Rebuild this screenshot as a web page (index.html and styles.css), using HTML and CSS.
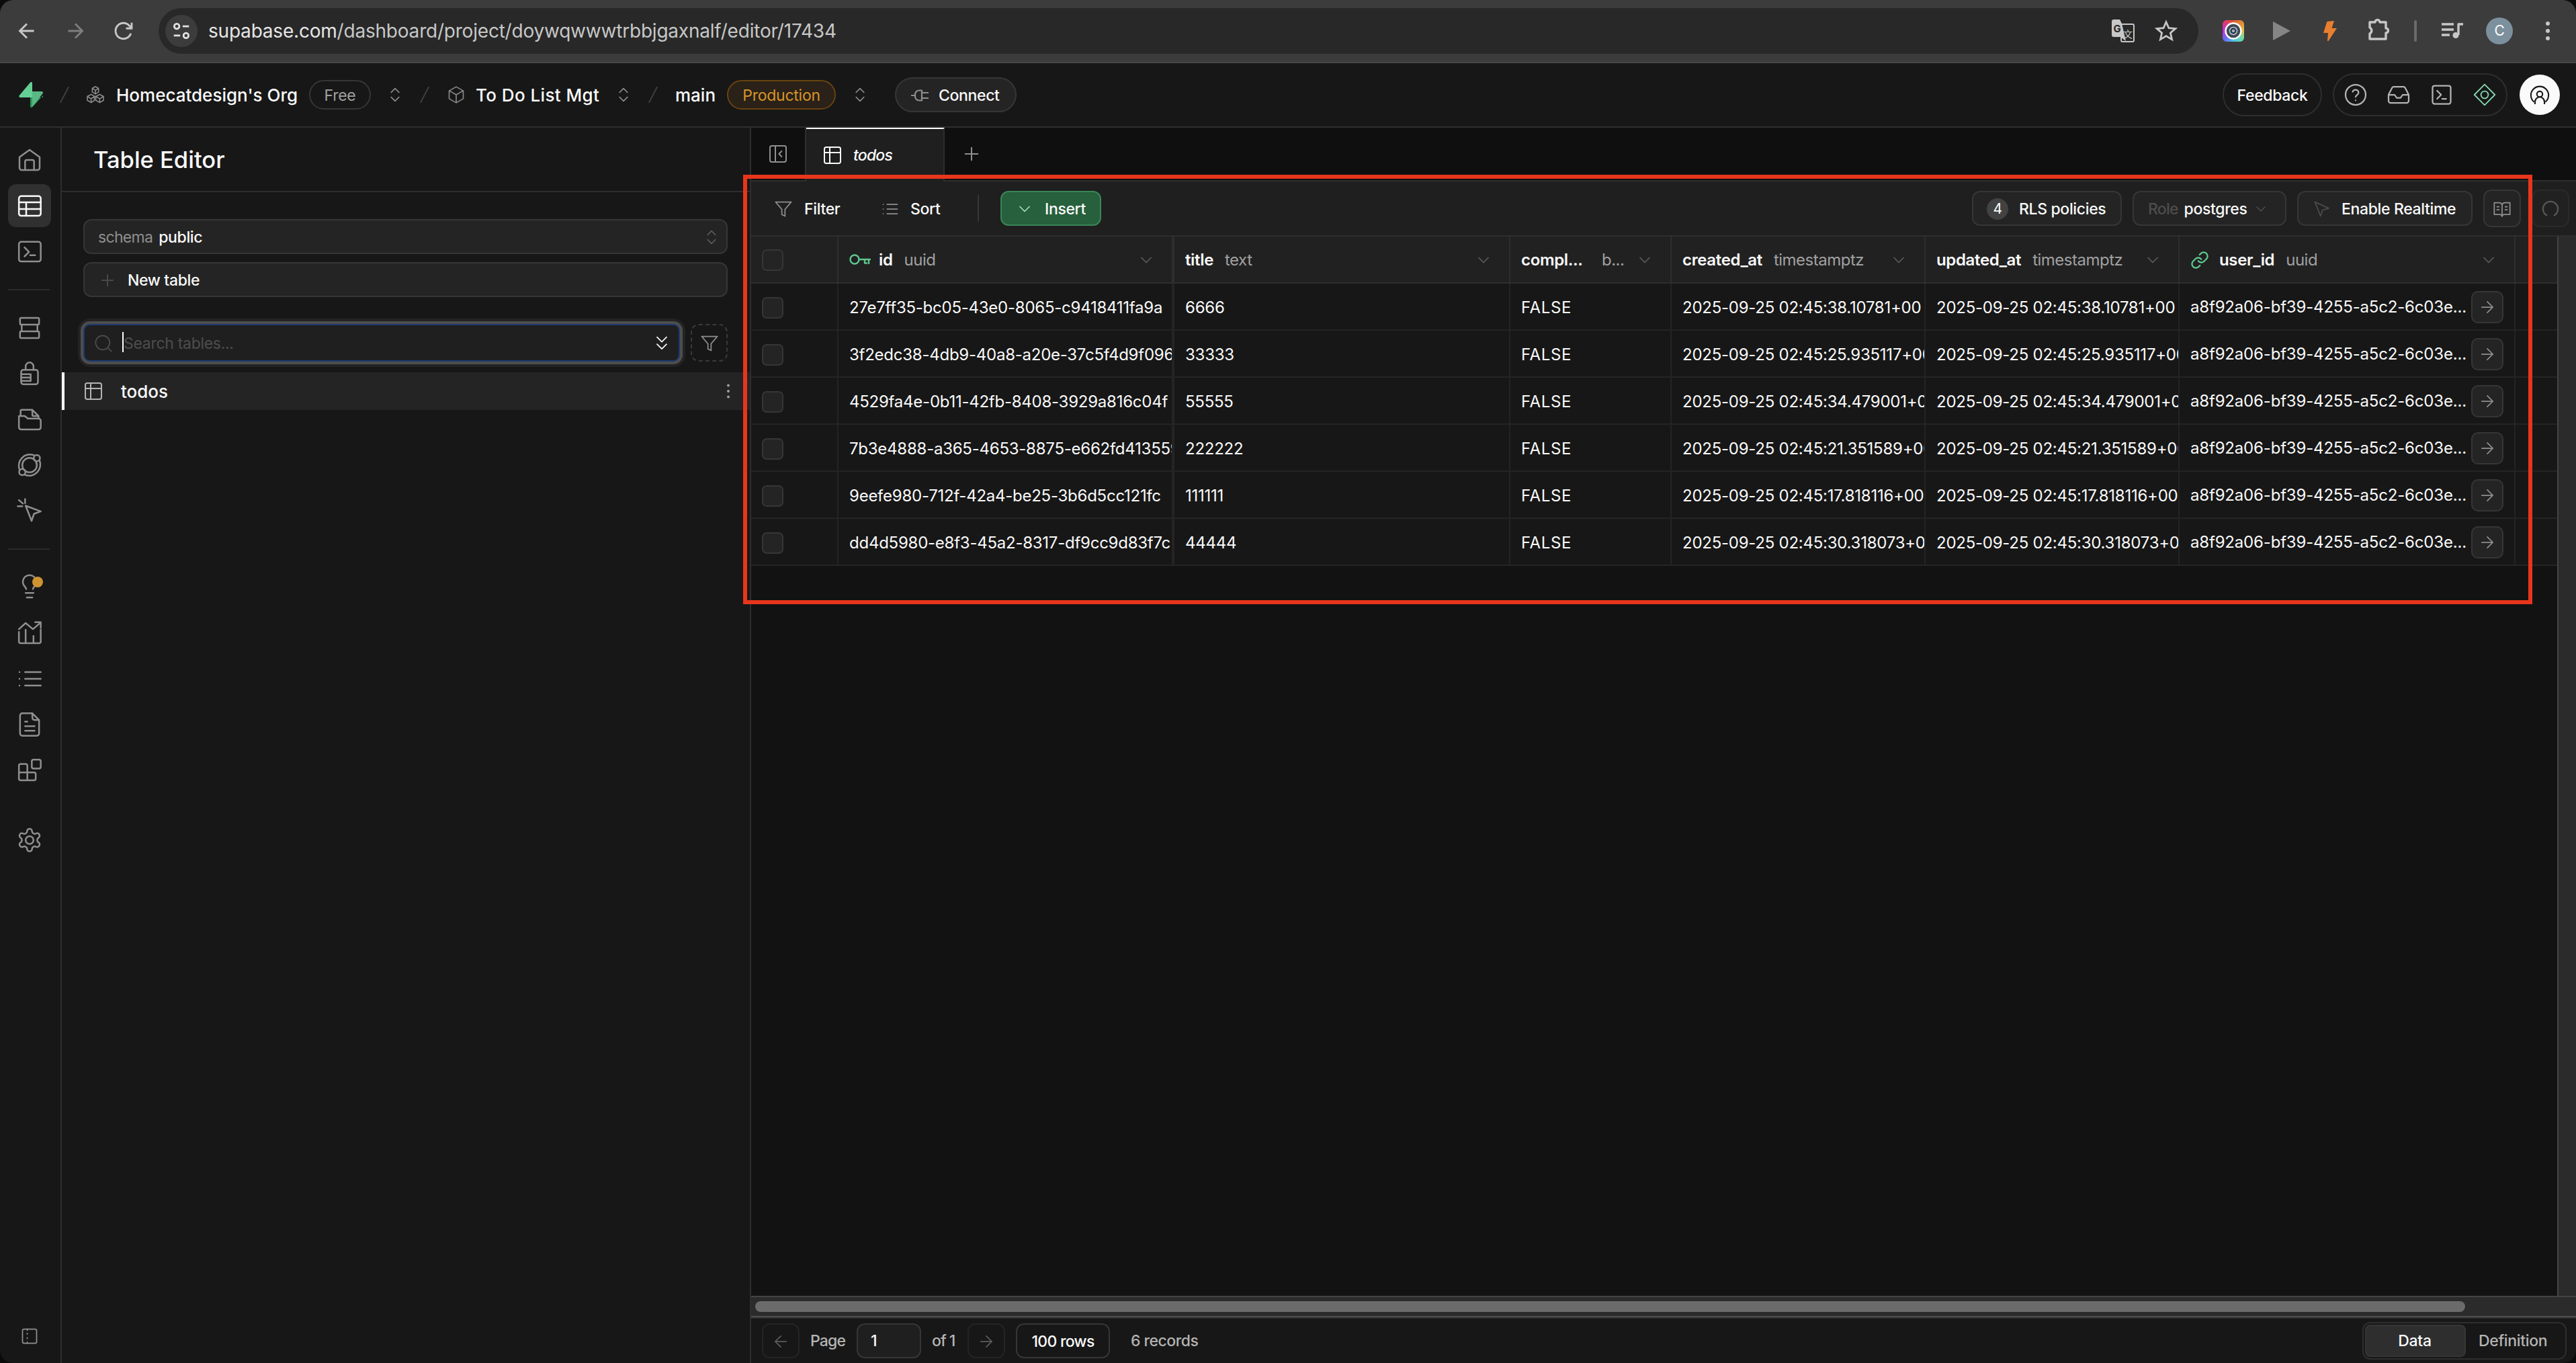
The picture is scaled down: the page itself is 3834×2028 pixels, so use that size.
FILE: index.html
```
<!DOCTYPE html>
<html lang="en">
<head>
    <meta charset="UTF-8">
    <meta name="viewport" content="width=device-width, initial-scale=1.0">
    <title>todos | Table Editor | Supabase</title>
    <link rel="stylesheet" href="styles.css">
</head>
<body>
    <!-- icon set -->
    <svg class="sprite">
        <symbol id="chevrons" viewBox="0 0 24 24"><path d="m7 15 5 5 5-5M7 9l5-5 5 5"/></symbol>
        <symbol id="chevron" viewBox="0 0 24 24"><path d="m6 9 6 6 6-6"/></symbol>
        <symbol id="slash" viewBox="0 0 14 24"><path d="M13 .5 1 23.5"/></symbol>
        <symbol id="arrow" viewBox="0 0 24 24"><path d="M5 12h14M12 5l7 7-7 7"/></symbol>
        <symbol id="arrow-left" viewBox="0 0 24 24"><path d="M19 12H5M12 19l-7-7 7-7"/></symbol>
        <symbol id="plus" viewBox="0 0 24 24"><path d="M5 12h14M12 5v14"/></symbol>
        <symbol id="filter" viewBox="0 0 24 24"><path d="M22 3H2l8 9.46V19l4 2v-8.54z"/></symbol>
        <symbol id="list" viewBox="0 0 24 24"><path d="M8 6h13M8 12h13M8 18h13M3 6h.01M3 12h.01M3 18h.01"/></symbol>
        <symbol id="table" viewBox="0 0 24 24"><rect x="3" y="3" width="18" height="18" rx="2"/><path d="M3 9h18M9 3v18"/></symbol>
        <symbol id="terminal" viewBox="0 0 24 24"><rect x="3" y="3" width="18" height="18" rx="2"/><path d="m7.5 8 4 4-4 4M12.5 16h4"/></symbol>
    </svg>

    <div class="window">
        <div class="browser-bar">
            <svg class="nav-icon"><use href="#arrow-left"/></svg>
            <svg class="nav-icon disabled"><use href="#arrow"/></svg>
            <svg class="nav-icon" viewBox="0 0 24 24"><path d="M19.2 14.5A7.8 7.8 0 1 1 17.8 7l2.2 2.4M20 3.8v5.7h-5.6"/></svg>
            <div class="omnibox">
                <div class="site-info">
                    <svg viewBox="0 0 24 24"><circle cx="6.5" cy="6.5" r="3"/><path d="M13.5 6.5H21M3 17.500h7.500"/><circle cx="17.500" cy="17.500" r="3"/></svg>
                </div>
                <div class="url"><b>supabase.com</b>/dashboard/project/doywqwwwtrbbjgaxnalf/editor/17434</div>
                <svg class="translate" viewBox="0 0 34 34">
                    <rect x="14" y="7" width="19" height="26" rx="2" fill="none" stroke="#c7c7c7" stroke-width="2"/>
                    <text x="17" y="27" class="tr-zh">文</text>
                    <path d="M3 0h9l3 6 6 26-8-6H3q-3 0-3-3V3q0-3 3-3z" fill="#c7c7c7"/>
                    <text x="2.500" y="19" class="tr-g">G</text>
                </svg>
                <svg class="star" viewBox="0 0 32 32"><path d="M16 3.500 19.700 12l9.300.8-7 6.100 2.100 9.100L16 23.200 7.900 28 10 18.900 3 12.800l9.300-.8z"/></svg>
            </div>
            <div class="extensions">
                <svg class="ext-camera" viewBox="0 0 32 32"><circle cx="16" cy="16" r="11.500" fill="#3d4a56" stroke="#fff" stroke-width="2.500"/><circle cx="16" cy="16" r="5.500" fill="#27415a"/><circle cx="16" cy="16" r="1.300" fill="#5d7c93"/></svg>
                <svg class="ext-play" viewBox="0 0 28 28"><path d="M1 0v28l26-14z" fill="#858585"/></svg>
                <svg class="ext-bolt" viewBox="0 0 20 30"><path d="M5.500 1 16 0l-3.500 11H20L7.500 30H6l1-12H0z" fill="#e97f2e"/></svg>
                <svg class="ext-puzzle" viewBox="0 0 34 34"><path d="M3 6h8a3.500 3.500 0 0 1 7 0h9v9a3.500 3.500 0 0 1 0 7v9H3v-8a5 5 0 0 0 0-9z"/></svg>
                <span class="ext-divider"></span>
                <svg class="ext-music" viewBox="0 0 32 24"><path d="M0 2h18M0 10h18M0 18h12M25 18V2h7" /><circle cx="21" cy="18.500" r="4.500"/></svg>
                <span class="chrome-avatar">C</span>
                <svg class="chrome-menu" viewBox="0 0 6 30"><circle cx="3" cy="4" r="3"/><circle cx="3" cy="15" r="3"/><circle cx="3" cy="26" r="3"/></svg>
            </div>
        </div>

        <header class="topbar">
            <svg class="logo" viewBox="0 0 36 38"><path d="M20 37.500c-1 1.200-2.900.5-2.900-1V23h17.400c1.600 0 2.500-1.700 1.500-3z" fill="#2f9a63"/><path d="M17 .7C18-.6 20 .1 20 1.700V23H2.300c-1.600 0-2.500-1.800-1.500-3z" fill="#64cf94"/><path d="M20 14h14c1.700 0 2.600 2 1.500 3.300L20 37z" fill="#58b984"/></svg>
            <svg class="slash first"><use href="#slash"/></svg>
            <svg class="crumb-icon" viewBox="0 0 24 24"><path d="m12 1.500 4 2.300v4.700L12 11 8 8.500V3.800zM12 6.300V11M8 3.800l4 2.500 4-2.500M6.500 11.500l4.300 2.600v5L6.500 22l-4.800-2.900v-5zM6.500 17v5M1.700 14.100l4.800 2.900 5.500-3M17.500 11.500l4.800 2.600v5L17.500 22l-5-2.900v-5zM17.500 17v5M12.500 14.100l5 2.900 4.800-2.900"/></svg>
            <span class="crumb org">Homecatdesign's Org</span>
            <span class="badge">Free</span>
            <svg class="updown"><use href="#chevrons"/></svg>
            <svg class="slash"><use href="#slash"/></svg>
            <svg class="crumb-icon box" viewBox="0 0 24 24"><path d="M12 1.800 21 7v10l-9 5.200L3 17V7zM3.300 7 12 12l8.700-5M12 22V12"/></svg>
            <span class="crumb project">To Do List Mgt</span>
            <svg class="updown"><use href="#chevrons"/></svg>
            <svg class="slash"><use href="#slash"/></svg>
            <span class="crumb branch">main</span>
            <span class="badge production">Production</span>
            <svg class="updown"><use href="#chevrons"/></svg>
            <button class="connect">
                <svg viewBox="0 0 26 18"><path d="M0 9h6M16 1.500v15h-4a6 6 0 0 1-6-6v-3a6 6 0 0 1 6-6zM17 5h9M17 13h9"/></svg>
                Connect
            </button>

            <div class="topbar-right">
                <button class="feedback">Feedback</button>
                <div class="tools">
                    <svg viewBox="0 0 24 24"><circle cx="12" cy="12" r="10"/><path d="M9.100 9a3 3 0 0 1 5.800 1c0 2-2.900 2.500-2.900 4.200M12 17.500h.01"/></svg>
                    <svg viewBox="0 0 24 24"><path d="M22 12h-6l-2 3h-4l-2-3H2M5.500 5.100 2 12v6a2 2 0 0 0 2 2h16a2 2 0 0 0 2-2v-6l-3.500-6.900A2 2 0 0 0 16.800 4H7.200a2 2 0 0 0-1.700 1.100z"/></svg>
                    <svg viewBox="0 0 24 24"><use href="#terminal"/></svg>
                    <svg class="assistant" viewBox="0 0 24 24"><path d="m12 1.800 10.200 10.200L12 22.200 1.800 12z"/><circle cx="12" cy="12" r="3.600"/></svg>
                </div>
                <div class="profile">
                    <svg viewBox="0 0 32 32"><path d="M7 27.500A14 14 0 1 1 25 27.500"/><circle cx="16" cy="15" r="4.500"/><path d="M8.500 31v-3.500a7.500 8 0 0 1 15 0V31"/></svg>
                </div>
            </div>
        </header>

        <div class="layout">
            <nav class="rail">
                <a><svg viewBox="0 0 24 24"><path d="M3 9.500 12 3l9 6.500V19a2 2 0 0 1-2 2H5a2 2 0 0 1-2-2zM8 21v-7.500a1.500 1.500 0 0 1 1.500-1.500h5a1.500 1.500 0 0 1 1.500 1.500V21"/></svg></a>
                <a class="active"><svg viewBox="0 0 24 24"><rect x="2.500" y="3.500" width="19.500" height="17.500" rx="2"/><path d="M2.500 9H22M2.500 15H22M9 9v12"/></svg></a>
                <a><svg viewBox="0 0 24 24"><rect x="2.500" y="3.500" width="19.500" height="17.500" rx="2"/><path d="m7.500 8.500 4 4-4 4M12.500 15.500h4.500"/></svg></a>
                <hr>
                <a><svg viewBox="0 0 24 24"><rect x="3.500" y="3" width="17" height="6" rx="1"/><path d="M5 9v6M19 9v6"/><rect x="3.500" y="15" width="17" height="6" rx="1"/></svg></a>
                <a><svg viewBox="0 0 24 24"><rect x="4.500" y="8.500" width="15" height="13" rx="2"/><path d="M8.500 8.500V5.500a3.500 3.500 0 0 1 7 0v3M4.500 12.500h8.500v6H4.500M4.500 15.500H13"/></svg></a>
                <a><svg viewBox="0 0 24 24"><path d="M4 9V4.500a1 1 0 0 1 1-1h9.500L20 9v2M14.500 3.500V8a1 1 0 0 0 1 1H20M2.500 9h5.200l2.800 2.300H20a2 2 0 0 1 2 2V19a2 2 0 0 1-2 2H4.500a2 2 0 0 1-2-2z"/></svg></a>
                <a><svg viewBox="0 0 24 24"><circle cx="12" cy="12" r="6.500"/><circle cx="18.500" cy="5.800" r="2.800"/><circle cx="5.500" cy="18.200" r="2.800"/><path d="M16 3.200A10 10 0 0 0 3.200 16.500M20.800 7.500A10 10 0 0 1 8 20.800"/></svg></a>
                <a><svg viewBox="0 0 24 24"><path d="m8.500 7.500 13.500 5-6 2.200L13.800 21zM8 1.500v3.700M1.500 8h4M2.500 2.500l3.500 3"/></svg></a>
                <hr>
                <a class="advisor"><svg viewBox="0 0 24 24"><path d="M9 13.500c-.3-1.500-1-2-2-3.200A6 6 0 1 1 17 10.300c-1 1.200-1.700 1.700-2 3.200M8.500 17h7M9.500 21h5"/></svg><i></i></a>
                <a><svg viewBox="0 0 24 24"><path d="M2.500 11v8.500a1.500 1.500 0 0 0 1.500 1.500h16.500a1.500 1.500 0 0 0 1.500-1.500V9M8.500 9v12M15.500 14.500V21M2.500 8.500l6-5.500 6.500 5.500L22 2.500M17 2.300h5v5"/></svg></a>
                <a><svg viewBox="0 0 24 24"><path d="M8 6h14M8 12h14M8 18h14M3 6h.01M3 12h.01M3 18h.01"/></svg></a>
                <a><svg viewBox="0 0 24 24"><path d="M14.500 2H5.500a2 2 0 0 0-2 2v16a2 2 0 0 0 2 2h13a2 2 0 0 0 2-2V8zM14.500 2v4a2 2 0 0 0 2 2h4M8 9.500h2M8 13.500h8.500M8 17.500h8.500"/></svg></a>
                <a><svg viewBox="0 0 24 24"><rect x="14" y="2.500" width="8" height="8" rx="1.500"/><path d="M10 21V8a1.500 1.500 0 0 0-1.500-1.500H4A1.500 1.500 0 0 0 2.500 8v11.500A1.500 1.500 0 0 0 4 21h12a1.500 1.500 0 0 0 1.500-1.500v-4A1.500 1.500 0 0 0 16 14H2.500"/></svg></a>
                <a class="settings"><svg viewBox="0 0 24 24"><path d="M12.220 2h-.44a2 2 0 0 0-2 2v.18a2 2 0 0 1-1 1.730l-.43.25a2 2 0 0 1-2 0l-.15-.08a2 2 0 0 0-2.730.73l-.22.38a2 2 0 0 0 .73 2.730l.15.1a2 2 0 0 1 1 1.720v.51a2 2 0 0 1-1 1.740l-.15.090a2 2 0 0 0-.73 2.730l.22.380a2 2 0 0 0 2.730.730l.15-.080a2 2 0 0 1 2 0l.430.250a2 2 0 0 1 1 1.730V20a2 2 0 0 0 2 2h.440a2 2 0 0 0 2-2v-.180a2 2 0 0 1 1-1.730l.430-.250a2 2 0 0 1 2 0l.150.080a2 2 0 0 0 2.730-.730l.220-.390a2 2 0 0 0-.730-2.730l-.150-.080a2 2 0 0 1-1-1.740v-.500a2 2 0 0 1 1-1.740l.150-.090a2 2 0 0 0 .730-2.730l-.220-.380a2 2 0 0 0-2.730-.730l-.150.080a2 2 0 0 1-2 0l-.430-.250a2 2 0 0 1-1-1.730V4a2 2 0 0 0-2-2z"/><circle cx="12" cy="12" r="3.500"/></svg></a>
                <a class="collapse"><svg viewBox="0 0 24 24"><rect x="3" y="3" width="18" height="18" rx="2"/><path d="M9 3v1.500M9 8.500v1M9 14v1M9 19.500V21"/></svg></a>
            </nav>

            <aside class="panel">
                <h1>Table Editor</h1>
                <div class="panel-buttons">
                    <button class="schema"><span>schema</span> public <svg><use href="#chevrons"/></svg></button>
                    <button class="new-table"><svg><use href="#plus"/></svg>New table</button>
                </div>
                <div class="search-row">
                    <div class="search">
                        <svg class="search-icon" viewBox="0 0 24 24"><circle cx="11" cy="11" r="9"/><path d="m22 22-4-4"/></svg>
                        <span class="caret"></span>
                        <span class="placeholder">Search tables...</span>
                        <svg class="expand" viewBox="0 0 24 24"><path d="m6 4 6 6 6-6M6 13l6 6 6-6"/></svg>
                    </div>
                    <button class="filter-types"><svg><use href="#filter"/></svg></button>
                </div>
                <div class="entity">
                    <svg class="entity-icon"><use href="#table"/></svg>
                    <span>todos</span>
                    <svg class="dots" viewBox="0 0 4 22"><circle cx="2" cy="2.500" r="2"/><circle cx="2" cy="11" r="2"/><circle cx="2" cy="19.500" r="2"/></svg>
                </div>
            </aside>

            <main class="editor">
                <div class="tabs">
                    <div class="tab-collapse"><svg viewBox="0 0 24 24"><rect x="3" y="3" width="18" height="18" rx="2"/><path d="M9 3v18M16 9l-3 3 3 3"/></svg></div>
                    <div class="tab"><svg><use href="#table"/></svg><em>todos</em></div>
                    <div class="tab-add"><svg><use href="#plus"/></svg></div>
                </div>

                <div class="toolbar">
                    <button class="plain filter"><svg><use href="#filter"/></svg>Filter</button>
                    <button class="plain sort"><svg><use href="#list"/></svg>Sort</button>
                    <span class="toolbar-divider"></span>
                    <button class="insert"><svg><use href="#chevron"/></svg>Insert</button>
                    <div class="toolbar-right">
                        <button class="rls"><i>4</i>RLS policies</button>
                        <button class="role"><span>Role</span>postgres<svg><use href="#chevron"/></svg></button>
                        <button class="realtime"><svg viewBox="0 0 24 24"><path d="m3 3 7.100 18 2.500-7.500L20.500 11z"/></svg>Enable Realtime</button>
                        <button class="square"><svg viewBox="0 0 24 24"><path d="M12 6.500v15M2 4h6a4 4 0 0 1 4 3 4 4 0 0 1 4-3h6v15h-7a3 3 0 0 0-3 2.500A3 3 0 0 0 9 19H2zM5.500 9H8M5.500 13H8M16 9h2.500M16 13h2.500"/></svg></button>
                        <button class="square loading"><svg viewBox="0 0 24 24"><path d="M7 20a9.500 9.500 0 1 1 10 0"/></svg></button>
                    </div>
                </div>

                <div class="grid-wrap">
                    <div class="grid">
                        <div class="row head">
                            <div><i class="check"></i></div>
                            <div class="frozen"><svg class="key" viewBox="0 0 32 18"><circle cx="8" cy="8" r="6.500"/><path d="M14.500 8H31M29 8v6M23 8v5.500h3"/></svg><b>id</b><span>uuid</span><svg class="caret-down"><use href="#chevron"/></svg></div>
                            <div><b>title</b><span>text</span><svg class="caret-down"><use href="#chevron"/></svg></div>
                            <div class="completed"><b>compl...</b><span>b...</span><svg class="caret-down"><use href="#chevron"/></svg></div>
                            <div><b>created_at</b><span>timestamptz</span><svg class="caret-down"><use href="#chevron"/></svg></div>
                            <div><b>updated_at</b><span>timestamptz</span><svg class="caret-down"><use href="#chevron"/></svg></div>
                            <div><svg class="link" viewBox="0 0 24 24"><path d="M10 13a5 5 0 0 0 7.540.540l3-3a5 5 0 0 0-7.070-7.070l-1.720 1.710M14 11a5 5 0 0 0-7.540-.540l-3 3a5 5 0 0 0 7.070 7.070l1.710-1.710"/></svg><b>user_id</b><span>uuid</span><svg class="caret-down"><use href="#chevron"/></svg></div>
                            <div></div>
                        </div>
                        <div class="row">
                            <div><i class="check"></i></div>
                            <div class="frozen">27e7ff35-bc05-43e0-8065-c9418411fa9a</div>
                            <div>6666</div>
                            <div class="bool">FALSE</div>
                            <div>2025-09-25 02:45:38.10781+00</div>
                            <div>2025-09-25 02:45:38.10781+00</div>
                            <div class="fk">a8f92a06-bf39-4255-a5c2-6c03e...<button><svg><use href="#arrow"/></svg></button></div>
                            <div></div>
                        </div>
                        <div class="row">
                            <div><i class="check"></i></div>
                            <div class="frozen">3f2edc38-4db9-40a8-a20e-37c5f4d9f096</div>
                            <div>33333</div>
                            <div class="bool">FALSE</div>
                            <div>2025-09-25 02:45:25.935117+00</div>
                            <div>2025-09-25 02:45:25.935117+00</div>
                            <div class="fk">a8f92a06-bf39-4255-a5c2-6c03e...<button><svg><use href="#arrow"/></svg></button></div>
                            <div></div>
                        </div>
                        <div class="row">
                            <div><i class="check"></i></div>
                            <div class="frozen">4529fa4e-0b11-42fb-8408-3929a816c04f</div>
                            <div>55555</div>
                            <div class="bool">FALSE</div>
                            <div>2025-09-25 02:45:34.479001+00</div>
                            <div>2025-09-25 02:45:34.479001+00</div>
                            <div class="fk">a8f92a06-bf39-4255-a5c2-6c03e...<button><svg><use href="#arrow"/></svg></button></div>
                            <div></div>
                        </div>
                        <div class="row">
                            <div><i class="check"></i></div>
                            <div class="frozen">7b3e4888-a365-4653-8875-e662fd413559</div>
                            <div>222222</div>
                            <div class="bool">FALSE</div>
                            <div>2025-09-25 02:45:21.351589+00</div>
                            <div>2025-09-25 02:45:21.351589+00</div>
                            <div class="fk">a8f92a06-bf39-4255-a5c2-6c03e...<button><svg><use href="#arrow"/></svg></button></div>
                            <div></div>
                        </div>
                        <div class="row">
                            <div><i class="check"></i></div>
                            <div class="frozen">9eefe980-712f-42a4-be25-3b6d5cc121fc</div>
                            <div>111111</div>
                            <div class="bool">FALSE</div>
                            <div>2025-09-25 02:45:17.818116+00</div>
                            <div>2025-09-25 02:45:17.818116+00</div>
                            <div class="fk">a8f92a06-bf39-4255-a5c2-6c03e...<button><svg><use href="#arrow"/></svg></button></div>
                            <div></div>
                        </div>
                        <div class="row">
                            <div><i class="check"></i></div>
                            <div class="frozen">dd4d5980-e8f3-45a2-8317-df9cc9d83f7c</div>
                            <div>44444</div>
                            <div class="bool">FALSE</div>
                            <div>2025-09-25 02:45:30.318073+00</div>
                            <div>2025-09-25 02:45:30.318073+00</div>
                            <div class="fk">a8f92a06-bf39-4255-a5c2-6c03e...<button><svg><use href="#arrow"/></svg></button></div>
                            <div></div>
                        </div>
                    </div>
                    <div class="vscroll"></div>
                </div>
                <div class="hscroll"><div class="thumb"></div></div>

                <footer class="pager">
                    <button class="page-btn"><svg><use href="#arrow-left"/></svg></button>
                    <span class="page-label">Page</span>
                    <span class="page-input">1</span>
                    <span class="page-of">of 1</span>
                    <button class="page-btn"><svg><use href="#arrow"/></svg></button>
                    <button class="rows">100 rows</button>
                    <span class="records">6 records</span>
                    <div class="switch"><span class="on">Data</span><span>Definition</span></div>
                </footer>
            </main>
        </div>
        <div class="highlight"></div>
    </div>
</body>
</html>
```
FILE: styles.css
```
* {
    box-sizing: border-box;
}
body {
    margin: 0;
    background: #0b0b0b;
    color: #fafafa;
    font-family: Inter, "Liberation Sans", sans-serif;
    font-size: 24px;
    letter-spacing: -0.25px;
    white-space: nowrap;
}
svg {
    width: 28px;
    height: 28px;
    flex: none;
    fill: none;
    stroke: currentColor;
    stroke-width: 1.5;
    stroke-linecap: round;
    stroke-linejoin: round;
}
button {
    display: flex;
    align-items: center;
    height: 52px;
    padding: 2px 0 0;
    border: 2px solid #363636;
    border-radius: 12px;
    background: #242424;
    color: #fafafa;
    font: 500 23px Inter, "Liberation Sans", sans-serif;
    letter-spacing: -0.35px;
}
.sprite {
    display: none;
}
.window {
    position: relative;
    display: flex;
    flex-direction: column;
    width: 3834px;
    height: 2028px;
    border-radius: 20px;
    overflow: hidden;
    background: #171717;
}

/* browser toolbar */
.browser-bar {
    display: flex;
    align-items: center;
    height: 94px;
    padding-left: 22px;
    border-bottom: 2px solid #474747;
    background: #3c3c3c;
    color: #c7c7c7;
}
.nav-icon {
    width: 36px;
    height: 36px;
    margin-right: 36px;
    stroke-width: 1.9;
    stroke-linecap: butt;
    stroke-linejoin: miter;
}
.nav-icon.disabled {
    color: #7e7e7e;
}
.omnibox {
    display: flex;
    align-items: center;
    width: 3036px;
    height: 68px;
    margin-left: -2px;
    padding: 0 31px 0 10px;
    border-radius: 34px;
    background: #282828;
}
.site-info {
    display: flex;
    align-items: center;
    justify-content: center;
    width: 48px;
    height: 48px;
    border-radius: 50%;
    background: #3c3c3c;
    color: #e3e3e3;
}
.site-info svg {
    width: 30px;
    height: 30px;
    stroke-width: 2.2;
    stroke-linecap: butt;
}
.url {
    margin-left: 16px;
    margin-right: auto;
    font-size: 28px;
    letter-spacing: -0.21px;
}
.url b {
    color: #e6e6e6;
    font-weight: 400;
}
.translate {
    width: 34px;
    height: 34px;
    margin-right: 30px;
    stroke: none;
}
.tr-g {
    fill: #282828;
    font: 700 15px Inter, sans-serif;
}
.tr-zh {
    fill: #c7c7c7;
    font: 14px "Noto Sans CJK SC", sans-serif;
}
.star {
    width: 34px;
    height: 34px;
    stroke-width: 2.6;
    stroke-linejoin: miter;
}
.extensions {
    display: flex;
    align-items: center;
    margin-left: 36px;
}
.ext-camera {
    width: 32px;
    height: 32px;
    border-radius: 6px;
    background: conic-gradient(#e0592b, #e2c04a 90deg, #6cd8a8 130deg, #4cc3e8 180deg, #6b6bf0 225deg, #c42be0 270deg, #e03a6b 320deg, #e0592b);
}
.ext-play {
    margin-left: 42px;
    stroke: none;
}
.ext-bolt {
    width: 20px;
    height: 30px;
    margin-left: 48px;
    stroke: none;
}
.ext-puzzle {
    width: 34px;
    height: 34px;
    margin-left: 46px;
    stroke-width: 3.4;
    margin-bottom: 4px;
}
.ext-divider {
    width: 4px;
    height: 32px;
    margin: 0 37px 0 35px;
    border-radius: 2px;
    background: #6b6b6b;
}
.ext-music {
    width: 32px;
    height: 24px;
    stroke-width: 3.4;
    stroke-linecap: butt;
}
.ext-music circle {
    fill: #c7c7c7;
    stroke: none;
}
.chrome-avatar {
    width: 40px;
    height: 40px;
    margin-left: 34px;
    border-radius: 50%;
    background: #7c909d;
    color: #fff;
    font-size: 21px;
    line-height: 40px;
    text-align: center;
}
.chrome-menu {
    width: 6px;
    height: 30px;
    margin-left: 49px;
    fill: #c7c7c7;
    stroke: none;
}

/* app header */
.topbar {
    display: flex;
    align-items: center;
    height: 96px;
    padding: 0 24px 0 28px;
    border-bottom: 2px solid #2e2e2e;
}
.logo {
    width: 36px;
    height: 38px;
    stroke: none;
}
.slash {
    width: 14px;
    height: 24px;
    margin-left: 23px;
    color: #404040;
    stroke-width: 1.8;
}
.slash.first {
    margin-left: 25px;
}
.crumb-icon {
    margin-left: 25px;
    color: #898989;
    stroke-width: 1.4;
}
.crumb-icon.box {
    margin-left: 26px;
}
.crumb {
    padding-top: 1px;
    font-size: 26px;
    font-weight: 500;
    letter-spacing: 0;
}
.org {
    width: 270px;
    margin-left: 17px;
}
.project {
    width: 184px;
    margin-left: 15px;
    letter-spacing: 0.4px;
}
.branch {
    width: 61px;
    margin-left: 26px;
}
.badge {
    display: flex;
    align-items: center;
    justify-content: center;
    width: 92px;
    height: 44px;
    margin-left: 17px;
    padding-top: 2px;
    border: 2px solid #363636;
    border-radius: 22px;
    color: #a0a0a0;
    font-size: 23px;
}
.production {
    width: 162px;
    margin-left: 16px;
    border-color: #68430f;
    background: #2a2118;
    color: #d8942a;
}
.updown {
    margin-left: 22px;
    color: #8c8c8c;
}
.connect {
    width: 181px;
    margin-left: 38px;
    padding-left: 22px;
    border-radius: 26px;
}
.connect svg {
    width: 26px;
    height: 18px;
    margin-right: 15px;
    color: #8f8f8f;
    stroke-width: 2.2;
    stroke-linecap: butt;
}
.topbar-right {
    display: flex;
    align-items: center;
    margin-left: auto;
}
.feedback {
    justify-content: center;
    width: 148px;
    height: 64px;
    border-color: #2e2e2e;
    border-radius: 32px;
    background: #171717;
}
.tools {
    display: flex;
    align-items: center;
    gap: 28px;
    width: 260px;
    height: 64px;
    margin: 0 18px 0 16px;
    padding-left: 14px;
    border: 2px solid #2e2e2e;
    border-radius: 32px;
    color: #b4b4b4;
}
.tools svg {
    width: 36px;
    height: 36px;
}
.tools .assistant {
    color: #85d8b0;
    stroke-width: 1.2;
}
.profile {
    display: flex;
    align-items: center;
    justify-content: center;
    width: 60px;
    height: 60px;
    border-radius: 50%;
    background: #fafafa;
    color: #171717;
}
.profile svg {
    width: 30px;
    height: 30px;
    stroke-width: 2.2;
    stroke-linecap: butt;
}

.layout {
    display: flex;
    flex: 1;
    min-height: 0;
}

/* icon rail */
.rail {
    display: flex;
    flex-direction: column;
    gap: 4px;
    width: 92px;
    padding: 16px 12px 8px;
    border-right: 2px solid #2e2e2e;
    color: #8f8f8f;
}
.rail a {
    display: flex;
    align-items: center;
    justify-content: center;
    width: 64px;
    height: 64px;
    border-radius: 12px;
}
.rail a.active {
    background: #303030;
    color: #fafafa;
}
.rail svg {
    width: 40px;
    height: 40px;
}
.rail hr {
    width: 62px;
    height: 2px;
    margin: 20px 0;
    border: 0;
    background: #2a2a2a;
}
.advisor {
    position: relative;
}
.advisor i {
    position: absolute;
    top: 16px;
    left: 36px;
    width: 16px;
    height: 16px;
    border-radius: 50%;
    background: #cf932f;
}
.settings {
    margin-top: 36px;
}
.rail .collapse {
    margin-top: auto;
}
.rail .collapse svg {
    width: 28px;
    height: 28px;
}

/* table list */
.panel {
    width: 1026px;
    border-right: 2px solid #2e2e2e;
}
h1 {
    height: 96px;
    margin: 0;
    padding-left: 47px;
    border-bottom: 2px solid #2e2e2e;
    font-size: 34.5px;
    font-weight: 500;
    line-height: 96px;
    letter-spacing: 0;
}
.panel-buttons {
    display: flex;
    flex-direction: column;
    gap: 12px;
    padding: 40px 33px 40px 32px;
}
.schema {
    padding: 2px 8px 0 20px;
    gap: 9px;
}
.schema span {
    color: #8f8f8f;
    font-weight: 400;
    letter-spacing: -0.7px;
}
.schema svg {
    margin-left: auto;
    color: #5c5c5c;
}
.new-table svg {
    margin: 0 16px 0 20px;
    color: #4d4d4d;
}
.search-row {
    display: flex;
    gap: 16px;
    padding: 0 33px 0 32px;
}
.search {
    display: flex;
    align-items: center;
    flex: 1;
    height: 56px;
    padding: 2px 10px 0 14px;
    border: 2px solid #1c3a70;
    border-radius: 10px;
    background: #1f1f1f;
    box-shadow: 0 0 0 4px #4d4d4d, 0 0 0 8px #232323;
}
.search-icon {
    color: #4d4d4d;
}
.caret {
    width: 2px;
    height: 30px;
    margin-left: 14px;
    margin-top: -4px;
    background: #fff;
}
.placeholder {
    font-size: 23px;
    color: #4d4d4d;
    letter-spacing: -0.3px;
}
.expand {
    width: 30px;
    margin-left: auto;
}
.filter-types {
    justify-content: center;
    width: 55px;
    height: 56px;
    border: 2px dashed #393939;
    background: none;
    color: #8f8f8f;
}
.entity {
    display: flex;
    align-items: center;
    height: 56px;
    margin-top: 16px;
    padding: 0 30px 0 27px;
    border-left: 4px solid #fff;
    background: #242424;
    font-size: 26px;
    font-weight: 500;
    letter-spacing: 0;
}
.entity-icon {
    width: 32px;
    height: 32px;
    margin-right: 25px;
    color: #b4b4b4;
}
.dots {
    width: 4px;
    height: 22px;
    margin-left: auto;
    fill: #a0a0a0;
    stroke: none;
}

/* editor tabs */
.editor {
    display: flex;
    flex-direction: column;
    flex: 1;
}
.tabs {
    display: flex;
    height: 80px;
    background: #0f0f0f;
}
.tab-collapse,
.tab,
.tab-add {
    display: flex;
    align-items: center;
    border-bottom: 2px solid #2e2e2e;
}
.tab-collapse {
    justify-content: center;
    width: 82px;
    border-right: 2px solid #2e2e2e;
    color: #8f8f8f;
}
.tab-collapse svg,
.tab svg {
    width: 32px;
    height: 32px;
}
.tab {
    width: 206px;
    padding-left: 23px;
    border-top: 2px solid #fff;
    border-right: 2px solid #2e2e2e;
    border-bottom: 0;
    background: #1f1f1f;
}
.tab em {
    margin-left: 15px;
    font-size: 23px;
    font-weight: 500;
    letter-spacing: -0.8px;
}
.tab-add {
    flex: 1;
    padding-left: 24px;
    color: #8f8f8f;
}
.tab-add svg {
    width: 32px;
    height: 32px;
}

/* toolbar */
.toolbar {
    display: flex;
    align-items: center;
    height: 82px;
    padding: 0 10px 0 34px;
    border-bottom: 2px solid #2e2e2e;
    background: #1f1f1f;
}
.toolbar svg {
    color: #8f8f8f;
}
.plain {
    border: 0;
    background: none;
}
.plain svg {
    margin-right: 17px;
}
.filter {
    width: 159px;
}
.sort {
    width: 144px;
}
.plain.sort svg {
    margin-right: 16px;
}
.toolbar-divider {
    width: 2px;
    height: 40px;
    background: #363636;
}
.insert {
    width: 150px;
    margin-left: 32px;
    padding-left: 20px;
    border-color: #3a8558;
    background: #27603c;
}
.toolbar .insert svg {
    margin-right: 16px;
    color: #9be3b9;
}
.toolbar-right {
    display: flex;
    align-items: center;
    gap: 16px;
    margin-left: auto;
}
.rls {
    width: 223px;
    padding-left: 20px;
}
.rls i {
    width: 32px;
    height: 32px;
    margin-right: 16px;
    border-radius: 50%;
    background: #424242;
    font-size: 21px;
    font-style: normal;
    font-weight: 400;
    line-height: 32px;
    text-align: center;
}
.role {
    width: 229px;
    padding-left: 21px;
}
.role span {
    margin-right: 9px;
    color: #4d4d4d;
    letter-spacing: -0.8px;
}
.toolbar .role svg {
    width: 24px;
    margin-left: 8px;
    color: #4d4d4d;
}
.realtime {
    width: 261px;
    padding-left: 21px;
}
.toolbar .realtime svg {
    margin-right: 15px;
    color: #4d4d4d;
}
.square {
    justify-content: center;
    width: 56px;
    height: 56px;
}
.loading {
    opacity: 0.5;
}
.loading svg {
    width: 30px;
    stroke-width: 2;
}

/* data grid */
.grid-wrap {
    display: flex;
    height: 1576px;
    background: #121212;
}
.grid {
    flex: 1;
}
.row {
    display: grid;
    grid-template-columns: 130px 500px 500px 240px 378px 378px 500px 1fr;
    height: 70px;
}
.row > div {
    display: flex;
    align-items: center;
    padding-top: 3px;
    padding-left: 16px;
    border-right: 2px solid #242424;
    border-bottom: 2px solid #242424;
    background: #171717;
    overflow: hidden;
    letter-spacing: -0.25px;
}
.row > div:last-child {
    border-right: 0;
}
.row > .frozen {
    border-right-width: 4px;
}
.row > .bool {
    letter-spacing: 0.6px;
}
.row > .fk {
    padding-top: 1px;
    letter-spacing: -0.18px;
}
.head > div {
    padding-top: 1px;
    padding-right: 24px;
    border-color: #2e2e2e;
    background: #212121;
}
.head b {
    font-weight: 600;
    letter-spacing: -0.35px;
}
.head span {
    margin-left: 17px;
    color: #a0a0a0;
    letter-spacing: -0.5px;
}
.head .completed b {
    width: 92px;
}
.head .completed span {
    margin-left: 28px;
}
.caret-down {
    margin-left: auto;
    color: #5c5c5c;
}
.key {
    width: 32px;
    height: 18px;
    margin-right: 12px;
    color: #5ec78f;
    stroke-width: 2.4;
}
.link {
    width: 28px;
    height: 28px;
    margin-right: 15px;
    color: #5ec78f;
    stroke-width: 2;
}
.check {
    width: 32px;
    height: 32px;
    border: 2px solid #363636;
    border-radius: 7px;
    background: #242424;
}
.fk button {
    justify-content: center;
    width: 48px;
    height: 48px;
    margin-left: auto;
    margin-right: 16px;
    padding: 0;
    border-radius: 10px;
    color: #8f8f8f;
}
.vscroll {
    width: 28px;
    border-left: 2px solid #444;
    background: #2b2b2b;
}
.hscroll {
    height: 32px;
    padding: 6px 0 0 6px;
    border-top: 2px solid #444;
    border-bottom: 2px solid #505050;
    background: #2b2b2b;
}
.thumb {
    width: 2545px;
    height: 16px;
    border-radius: 8px;
    background: #6b6b6b;
}

/* pagination */
.pager {
    display: flex;
    align-items: center;
    flex: 1;
    padding: 0 14px 0 16px;
    border-top: 2px solid #2e2e2e;
    color: #b4b4b4;
    font-size: 23px;
    font-weight: 500;
    letter-spacing: -0.35px;
}
.page-btn {
    justify-content: center;
    width: 56px;
    border-color: #242424;
    background: none;
    color: #5c5c5c;
}
.page-label {
    width: 53px;
    margin: 0 16px;
    letter-spacing: -0.8px;
}
.page-input {
    width: 96px;
    height: 52px;
    padding-left: 19px;
    border: 2px solid #363636;
    border-radius: 12px;
    background: #1f1f1f;
    color: #fafafa;
    line-height: 49px;
}
.page-of {
    width: 37px;
    margin: 0 16px;
    letter-spacing: -1px;
}
.rows {
    justify-content: center;
    width: 140px;
    margin-left: 16px;
    background: none;
    letter-spacing: -0.7px;
}
.records {
    margin-left: 31px;
    letter-spacing: -0.5px;
}
.switch {
    display: flex;
    width: 304px;
    height: 56px;
    margin-left: auto;
    padding: 2px;
    border: 2px solid #2e2e2e;
    border-radius: 12px;
    line-height: 48px;
}
.switch span {
    padding-left: 19px;
}
.switch .on {
    width: 150px;
    height: 48px;
    padding: 0 2px 0 0;
    border: 2px solid #363636;
    border-radius: 8px;
    background: #2e2e2e;
    color: #fafafa;
    line-height: 44px;
    text-align: center;
}

/* red frame drawn over the data grid */
.highlight {
    position: absolute;
    top: 260px;
    left: 1106px;
    width: 2663px;
    height: 639px;
    border: 6px solid #e8351c;
}
```
